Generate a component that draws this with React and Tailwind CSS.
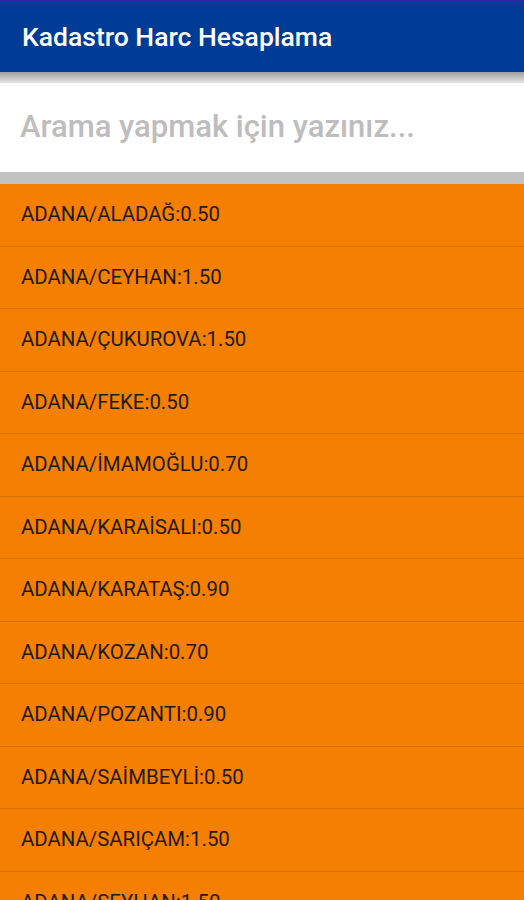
const items = [
  "ADANA/ALADAĞ:0.50",
  "ADANA/CEYHAN:1.50",
  "ADANA/ÇUKUROVA:1.50",
  "ADANA/FEKE:0.50",
  "ADANA/İMAMOĞLU:0.70",
  "ADANA/KARAİSALI:0.50",
  "ADANA/KARATAŞ:0.90",
  "ADANA/KOZAN:0.70",
  "ADANA/POZANTI:0.90",
  "ADANA/SAİMBEYLİ:0.50",
  "ADANA/SARIÇAM:1.50",
  "ADANA/SEYHAN:1.50",
  "ADANA/TUFANBEYLİ:0.50",
];

export default function App() {
  return (
    <div className="w-[524px] h-[900px] overflow-hidden bg-[#f57f00] font-['Roboto',sans-serif]">
      <div className="h-[2px] bg-[#3a22a6]" />
      <div className="h-[70px] bg-[#003b96] flex items-center px-[22px]">
        <h1 className="text-white text-[26.5px] font-medium">Kadastro Harc Hesaplama</h1>
      </div>
      <div className="h-[11px] bg-gradient-to-b from-[#9e9e9e] to-[#e6e6e6]" />
      <div className="h-[89px] bg-white flex items-center px-[20px]">
        <input
          className="w-full outline-none text-[31px] font-medium text-[#333] placeholder:text-[#bdbdbd] bg-transparent"
          placeholder="Arama yapmak için yazınız..."
        />
      </div>
      <div className="h-[12px] bg-[#c2c2c2]" />
      <ul>
        {items.map((item) => (
          <li
            key={item}
            className="h-[62.5px] flex items-center px-[21px] border-b border-[#d96f00] text-[20.4px] text-[#1f1a14]"
          >
            {item}
          </li>
        ))}
      </ul>
    </div>
  );
}
